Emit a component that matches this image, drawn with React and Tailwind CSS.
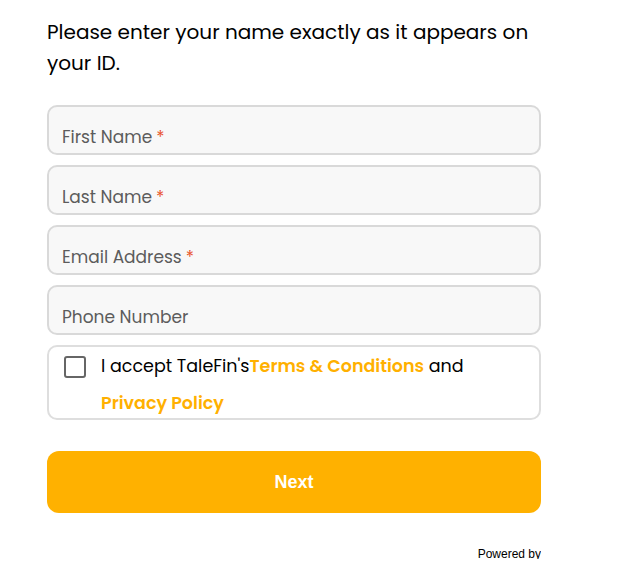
import React from 'react';

const fields = [
  { label: 'First Name', required: true },
  { label: 'Last Name', required: true },
  { label: 'Email Address', required: true },
  { label: 'Phone Number', required: false },
];

const poppins = { fontFamily: '"Poppins", "Open Sans", sans-serif' };
const arial = { fontFamily: '"Liberation Sans", Arial, sans-serif' };

export default function App() {
  return (
    <div className="w-[629px] h-[583px] overflow-hidden bg-white">
      <div className="w-[494px] ml-[47px] pt-[17px]">
        <p className="text-[20px] leading-[31px] text-black" style={poppins}>
          Please enter your name exactly as it appears on your ID.
        </p>

        <div className="mt-[26px] flex flex-col gap-[10px]">
          {fields.map((f) => (
            <div
              key={f.label}
              className="h-[50px] rounded-[10px] border-2 border-[#d9d9d9] bg-[#f8f8f8] px-[13px] pt-[18px]"
            >
              <span className="text-[17px] leading-[24px] text-[#5c5c5c]" style={poppins}>
                {f.label}
                <span className="ml-[4px] text-[#e8532b]">{f.required ? '*' : ''}</span>
              </span>
            </div>
          ))}

          <div className="h-[75px] rounded-[10px] border-2 border-[#dedede] bg-white pl-[15px] pr-3 pt-[9px] flex items-start gap-[15px]">
            <div className="w-[22px] h-[22px] shrink-0 rounded-[3px] border-2 border-[#666]" />
            <p className="text-[17.5px] leading-[37px] -mt-[8px] text-black" style={poppins}>
              I accept TaleFin's
              <span className="font-semibold text-[#ffb000]">Terms &amp; Conditions</span> and{' '}
              <span className="font-semibold text-[#ffb000]">Privacy Policy</span>
            </p>
          </div>
        </div>

        <button
          className="mt-[31px] w-full h-[62px] rounded-[12px] bg-[#ffb100] text-white text-[18px] font-bold"
          style={arial}
        >
          Next
        </button>

        <div className="mt-[34px] h-[12px] overflow-hidden text-right text-[12px] leading-[14px] text-black" style={arial}>
          Powered by
        </div>
      </div>
    </div>
  );
}
